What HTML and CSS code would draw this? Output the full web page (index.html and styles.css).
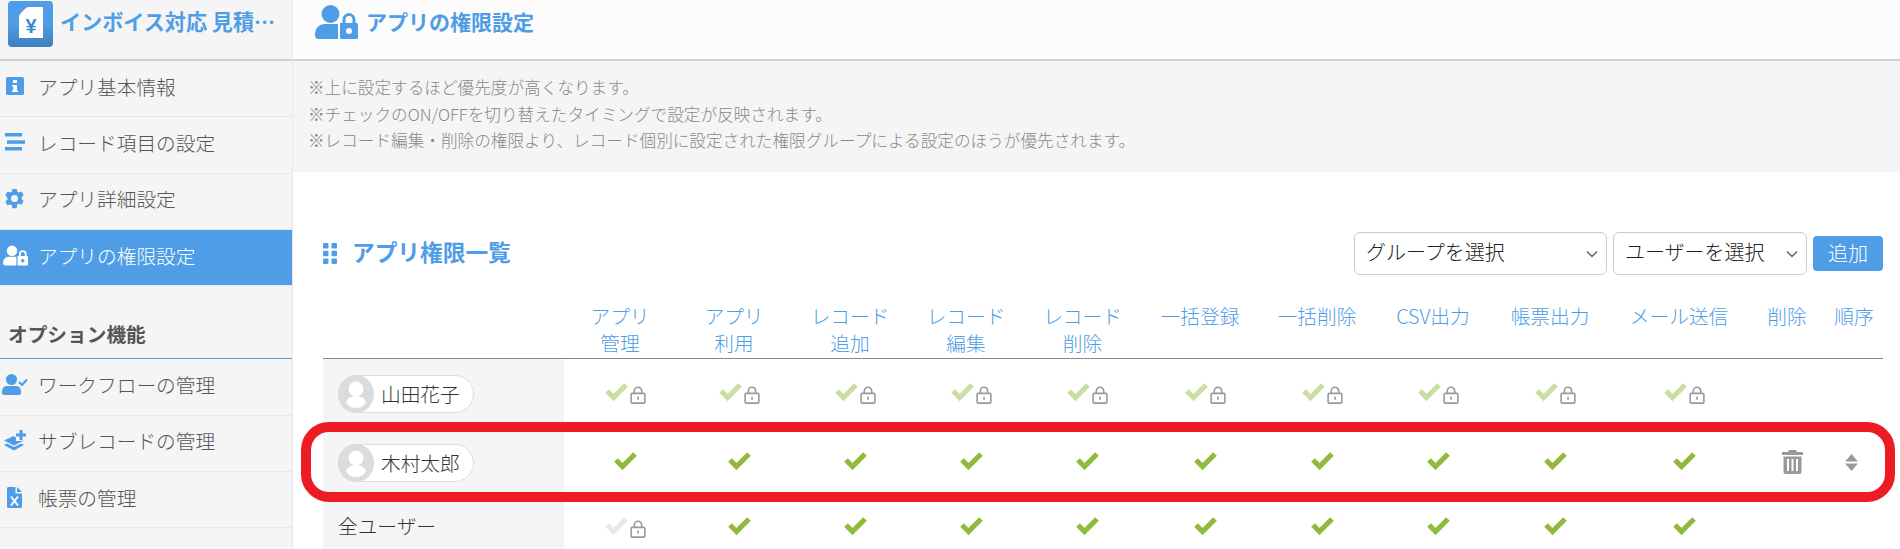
FILE: index.html
```html
<!DOCTYPE html>
<html lang="ja">
<head>
<meta charset="utf-8">
<title>アプリの権限設定</title>
<link rel="stylesheet" href="styles.css">
</head>
<body>
<svg class="defs" aria-hidden="true">
  <symbol id="i-check" viewBox="0 0 23 18"><path d="M2 8 8.500 14.500 21 2" fill="none" stroke="currentColor" stroke-width="5.200"/></symbol>
  <symbol id="i-lock" viewBox="0 0 15 17"><rect x="1" y="7" width="13" height="9.200" rx="1" fill="none" stroke="currentColor" stroke-width="1.500"/><path d="M4 7V4.700a3.500 3.500 0 0 1 7 0V7" fill="none" stroke="currentColor" stroke-width="1.500"/><rect x="6.800" y="10" width="1.500" height="3" fill="currentColor"/></symbol>
  <symbol id="i-userlock" viewBox="0 0 43 34"><circle cx="15.500" cy="9" r="9" fill="currentColor"/><path d="M0 30c0-7 4-11 10-11h11c1.600 0 2 .5 2 1v14H4c-2.500 0-4-1.500-4-4z" fill="currentColor"/><path fill-rule="evenodd" d="M25 18h2.500v-3.500a6.500 6.500 0 0 1 13 0V18h1c.8 0 1.500.7 1.500 1.500v13c0 .8-.7 1.500-1.500 1.500H26.500c-.8 0-1.500-.7-1.500-1.500zm5.500 0h7v-3.500a3.500 3.500 0 0 0-7 0zM34 23a3 3 0 1 0 0 6 3 3 0 0 0 0-6z" fill="currentColor"/></symbol>
  <symbol id="i-person" viewBox="0 0 36 38"><circle cx="18" cy="14" r="7.500" fill="#fff"/><ellipse cx="18" cy="27" rx="9.500" ry="6" fill="#fff"/></symbol>
</svg>

<div class="app">
  <aside class="sidebar">
    <div class="app-head">
      <svg class="app-logo" viewBox="0 0 45 46">
        <defs><linearGradient id="logo-grad" x1="0" y1="0" x2="0" y2="1"><stop offset="0.5" stop-color="#4e9de6"/><stop offset="1" stop-color="#3e7fbd"/></linearGradient></defs>
        <rect width="45" height="46" rx="4" fill="url(#logo-grad)"/>
        <path d="M19.500 6H35V37H11V14.500z" fill="#fff"/>
        <path d="M18 7V13H12z" fill="#fff"/>
        <text class="logo-yen" x="23" y="31.500" text-anchor="middle">¥</text>
      </svg>
      <div class="app-name">インボイス対応 見積…</div>
    </div>
    <nav>
      <a class="nav-item">
        <span class="nav-icon"><svg width="18" height="18" viewBox="0 0 18 18"><rect width="18" height="18" rx="1.500" fill="currentColor"/><rect x="7" y="3" width="4" height="3" fill="#fff"/><path d="M6 8h5v5.500h1V15H6v-1.500h1.200V9.500H6z" fill="#fff"/></svg></span>アプリ基本情報
      </a>
      <a class="nav-item">
        <span class="nav-icon"><svg width="20" height="18" viewBox="0 0 20 18"><rect width="17" height="3.500" fill="currentColor"/><rect x="2" y="7.300" width="18" height="3.500" fill="currentColor"/><rect y="14" width="17" height="3.500" fill="currentColor"/></svg></span>レコード項目の設定
      </a>
      <a class="nav-item">
        <span class="nav-icon"><svg width="21" height="21" viewBox="0 0 24 24"><path fill-rule="evenodd" fill="currentColor" d="M9.500 1h5l.7 3.200 1.800.9 3-1.200 2.500 4.300-2.400 2.200v2.200l2.400 2.200-2.500 4.300-3-1.200-1.800 1L14.500 23h-5l-.7-3.200-1.800-1-3 1.200-2.500-4.300 2.400-2.200v-2.200L1.500 8.200 4 3.900l3 1.200 1.800-.9zM12 8a4 4 0 1 0 0 8 4 4 0 0 0 0-8z"/></svg></span>アプリ詳細設定
      </a>
      <a class="nav-item is-active">
        <span class="nav-icon"><svg width="25" height="21"><use href="#i-userlock"/></svg></span>アプリの権限設定
      </a>
      <h2 class="nav-heading">オプション機能</h2>
      <a class="nav-item">
        <span class="nav-icon"><svg width="26" height="21" viewBox="0 0 26 21"><circle cx="9.500" cy="5.500" r="5.500" fill="currentColor"/><path d="M0 18c0-4 2-6 5-6h9c3 0 5 2 5 6v1c0 1-1 2-2 2H2c-1 0-2-1-2-2z" fill="currentColor"/><path d="M17 8l3 3 5-5.500" fill="none" stroke="currentColor" stroke-width="2.200"/></svg></span>ワークフローの管理
      </a>
      <a class="nav-item">
        <span class="nav-icon"><svg width="22" height="21" viewBox="0 0 22 21"><path d="M0 10.500 9.500 6 12 7.500v3.500h4.500L20 10.500 10 15.500z" fill="currentColor"/><path d="M0 15l3-1.500 7 3.500 7-3.500 3 1.500-10 5.500z" fill="currentColor"/><path d="M15.500 0h3v3.500H22v3h-3.500V10h-3V6.500H12v-3h3.500z" fill="currentColor"/></svg></span>サブレコードの管理
      </a>
      <a class="nav-item">
        <span class="nav-icon"><svg width="15" height="21" viewBox="0 0 15 21"><path d="M0 1.500C0 .7.700 0 1.500 0H8.500v6.500H15v13c0 .8-.7 1.500-1.500 1.500h-12C.7 21 0 20.300 0 19.500z" fill="currentColor"/><path d="M10 0l5 5h-5z" fill="currentColor"/><path d="M4 9.500 11 18.500M11 9.500 4 18.500" fill="none" stroke="#fff" stroke-width="2"/></svg></span>帳票の管理
      </a>
    </nav>
  </aside>

  <main class="content">
    <header class="page-head">
      <svg class="page-icon" width="43" height="34"><use href="#i-userlock"/></svg>
      <h1 class="page-title">アプリの権限設定</h1>
    </header>
    <div class="notes">
      <p>※上に設定するほど優先度が高くなります。</p>
      <p>※チェックのON/OFFを切り替えたタイミングで設定が反映されます。</p>
      <p>※レコード編集・削除の権限より、レコード個別に設定された権限グループによる設定のほうが優先されます。</p>
    </div>

    <section class="perm">
      <div class="toolbar">
        <h2 class="perm-title">
          <svg class="grip" width="14" height="21" viewBox="0 0 14 21"><rect width="5.500" height="5.500" rx="1" fill="currentColor"/><rect x="8.500" width="5.500" height="5.500" rx="1" fill="currentColor"/><rect y="7.700" width="5.500" height="5.500" rx="1" fill="currentColor"/><rect x="8.500" y="7.700" width="5.500" height="5.500" rx="1" fill="currentColor"/><rect y="15.500" width="5.500" height="5.500" rx="1" fill="currentColor"/><rect x="8.500" y="15.500" width="5.500" height="5.500" rx="1" fill="currentColor"/></svg>
          アプリ権限一覧
        </h2>
        <div class="controls">
          <select class="select select-group"><option>グループを選択</option></select>
          <select class="select select-user"><option>ユーザーを選択</option></select>
          <button class="btn-add" type="button">追加</button>
        </div>
      </div>

      <div class="grid grid-head">
        <div></div>
        <div>アプリ<br>管理</div><div>アプリ<br>利用</div><div>レコード<br>追加</div><div>レコード<br>編集</div><div>レコード<br>削除</div>
        <div>一括登録</div><div>一括削除</div><div>CSV出力</div><div>帳票出力</div><div>メール送信</div><div>削除</div><div>順序</div>
      </div>

      <div class="grid row">
        <div class="name-cell"><span class="pill"><svg class="avatar" width="36" height="38"><use href="#i-person"/></svg>山田花子</span></div>
        <div class="cell"><svg class="check soft"><use href="#i-check"/></svg><svg class="lock"><use href="#i-lock"/></svg></div>
        <div class="cell"><svg class="check soft"><use href="#i-check"/></svg><svg class="lock"><use href="#i-lock"/></svg></div>
        <div class="cell"><svg class="check soft"><use href="#i-check"/></svg><svg class="lock"><use href="#i-lock"/></svg></div>
        <div class="cell"><svg class="check soft"><use href="#i-check"/></svg><svg class="lock"><use href="#i-lock"/></svg></div>
        <div class="cell"><svg class="check soft"><use href="#i-check"/></svg><svg class="lock"><use href="#i-lock"/></svg></div>
        <div class="cell"><svg class="check soft"><use href="#i-check"/></svg><svg class="lock"><use href="#i-lock"/></svg></div>
        <div class="cell"><svg class="check soft"><use href="#i-check"/></svg><svg class="lock"><use href="#i-lock"/></svg></div>
        <div class="cell"><svg class="check soft"><use href="#i-check"/></svg><svg class="lock"><use href="#i-lock"/></svg></div>
        <div class="cell"><svg class="check soft"><use href="#i-check"/></svg><svg class="lock"><use href="#i-lock"/></svg></div>
        <div class="cell"><svg class="check soft"><use href="#i-check"/></svg><svg class="lock"><use href="#i-lock"/></svg></div>
        <div class="cell"></div><div class="cell"></div>
      </div>

      <div class="grid row">
        <div class="name-cell"><span class="pill"><svg class="avatar" width="36" height="38"><use href="#i-person"/></svg>木村太郎</span></div>
        <div class="cell"><svg class="check"><use href="#i-check"/></svg></div>
        <div class="cell"><svg class="check"><use href="#i-check"/></svg></div>
        <div class="cell"><svg class="check"><use href="#i-check"/></svg></div>
        <div class="cell"><svg class="check"><use href="#i-check"/></svg></div>
        <div class="cell"><svg class="check"><use href="#i-check"/></svg></div>
        <div class="cell"><svg class="check"><use href="#i-check"/></svg></div>
        <div class="cell"><svg class="check"><use href="#i-check"/></svg></div>
        <div class="cell"><svg class="check"><use href="#i-check"/></svg></div>
        <div class="cell"><svg class="check"><use href="#i-check"/></svg></div>
        <div class="cell"><svg class="check"><use href="#i-check"/></svg></div>
        <div class="cell"><svg class="trash" width="21" height="24" viewBox="0 0 21 24"><path d="M7 0h7l1 2h6v3H0V2h6z" fill="currentColor"/><path fill-rule="evenodd" d="M1.500 6.500h18V22c0 1-1 2-2 2h-14c-1 0-2-1-2-2zM5 9v12h2V9zm4.500 0v12h2V9zM14 9v12h2V9z" fill="currentColor"/></svg></div>
        <div class="cell cell-sort"><svg class="sort" width="13" height="17" viewBox="0 0 12 16"><path d="M6 0l6 7H0zM0 9h12l-6 7z" fill="currentColor"/></svg></div>
      </div>

      <div class="grid row row-plain">
        <div class="name-cell"><span class="name-text">全ユーザー</span></div>
        <div class="cell"><svg class="check faint"><use href="#i-check"/></svg><svg class="lock"><use href="#i-lock"/></svg></div>
        <div class="cell"><svg class="check"><use href="#i-check"/></svg></div>
        <div class="cell"><svg class="check"><use href="#i-check"/></svg></div>
        <div class="cell"><svg class="check"><use href="#i-check"/></svg></div>
        <div class="cell"><svg class="check"><use href="#i-check"/></svg></div>
        <div class="cell"><svg class="check"><use href="#i-check"/></svg></div>
        <div class="cell"><svg class="check"><use href="#i-check"/></svg></div>
        <div class="cell"><svg class="check"><use href="#i-check"/></svg></div>
        <div class="cell"><svg class="check"><use href="#i-check"/></svg></div>
        <div class="cell"><svg class="check"><use href="#i-check"/></svg></div>
        <div class="cell"></div><div class="cell"></div>
      </div>
    </section>
  </main>
</div>
<div class="highlight"></div>
</body>
</html>
```

FILE: styles.css
```css
* { box-sizing: border-box; }
html, body {
  margin: 0;
  height: 549px;
  overflow: hidden;
  background: #fff;
  color: #555;
  font-family: "Noto Sans CJK JP", "Noto Sans", sans-serif;
  font-weight: 300;
  font-size: 19.7px;
}
.defs { position: absolute; width: 0; height: 0; }
.app { display: flex; height: 549px; }

/* sidebar */
.sidebar {
  width: 293px;
  flex: none;
  background: #f6f5f6;
  border-right: 1px solid #e8e8e8;
}
.app-head {
  height: 61px;
  display: flex;
  align-items: flex-start;
  gap: 7px;
  padding: 1px 0 0 8px;
  border-bottom: 2px solid #d0d0d0;
}
.app-logo { width: 45px; height: 46px; flex: none; }
.logo-yen { font-size: 20px; font-weight: 700; fill: #3f8ad2; font-family: "Liberation Sans", sans-serif; }
.app-name {
  margin-top: 5px;
  font-size: 21.1px;
  line-height: 30px;
  font-weight: 700;
  color: #4e9de6;
  white-space: nowrap;
}
.nav-item {
  height: 56.33px;
  display: flex;
  align-items: center;
  padding-bottom: 5px;
  border-bottom: 1px solid #e9e8e9;
  color: #555;
  white-space: nowrap;
}
.nav-icon {
  width: 38px;
  flex: none;
  display: flex;
  justify-content: center;
  padding-right: 9px;
  color: #4e9de6;
}
.is-active { background: #4e9de6; color: #fff; border-bottom-color: #e9e8e9; }
.is-active .nav-icon { color: #fff; padding-right: 8px; }
.nav-heading {
  height: 73px;
  margin: 0;
  padding: 34px 0 0 8px;
  font-size: 19.7px;
  line-height: 28px;
  font-weight: 700;
  color: #555;
  border-bottom: 1px solid #4e9de6;
}

/* main */
.content { flex: 1; min-width: 0; }
.page-head {
  height: 61px;
  display: flex;
  align-items: flex-start;
  gap: 8px;
  padding: 5px 0 0 22px;
  background: #fcfcfd;
  border-bottom: 2px solid #d0d0d0;
  color: #4e9de6;
}
.page-title {
  margin: 0;
  font-size: 21px;
  line-height: 32px;
  font-weight: 700;
  color: #4e9de6;
}
.notes {
  height: 111px;
  padding: 13px 0 0 15px;
  background: #f6f5f6;
  color: #888;
  font-size: 16.64px;
  line-height: 26.6px;
}
.notes p { margin: 0; }

.perm { padding: 60px 17px 0 30px; }
.toolbar {
  display: flex;
  align-items: center;
  justify-content: space-between;
  height: 43px;
}
.perm-title {
  margin: 0;
  display: flex;
  align-items: center;
  gap: 15px;
  padding-bottom: 4px;
  font-size: 22.7px;
  line-height: 32px;
  font-weight: 700;
  color: #4e9de6;
}
.grip { margin-top: 4px; }
.controls { display: flex; align-items: center; gap: 6px; }
.select {
  appearance: none;
  height: 43px;
  padding: 0 28px 4px 11px;
  border: 1px solid #ccc;
  border-radius: 6px;
  background: #fff url("data:image/svg+xml,%3Csvg xmlns='http://www.w3.org/2000/svg' viewBox='0 0 12 8'%3E%3Cpath d='M1 1.500l5 5 5-5' fill='none' stroke='%23666' stroke-width='1.500'/%3E%3C/svg%3E") no-repeat right 8px center / 12px 8px;
  color: #222;
  font: inherit;
  font-size: 20px;
}
.select-group { width: 253px; }
.select-user { width: 194px; }
.btn-add {
  width: 70px;
  height: 35px;
  padding: 0 0 3px;
  border: 0;
  border-radius: 4px;
  background: #4e9de6;
  color: #fff;
  font: inherit;
  font-size: 20px;
}

.grid {
  display: grid;
  grid-template-columns: 241px 112px 116px 116px 116px 117px 118px 116px 116px 118px 140px 76px 58px;
}
.grid-head {
  margin-top: 23px;
  height: 61px;
  padding-top: 4px;
  border-bottom: 1px solid #888;
  color: #4e9de6;
  text-align: center;
  line-height: 27px;
}
.row { height: 69px; }
.row-plain { height: 60px; }
.name-cell {
  display: flex;
  align-items: center;
  padding-left: 15px;
  background: #f6f5f6;
  color: #333;
}
.pill {
  display: inline-flex;
  align-items: center;
  height: 38px;
  width: 136px;
  gap: 7px;
  border: 1px solid #ddd;
  border-radius: 19px;
  background: #fff;
  color: #333;
  line-height: 32px;
}
.avatar { margin-left: -1px; border-radius: 50%; background: #dcdcdc; flex: none; }
.name-text { padding-bottom: 3px; }
.cell {
  display: flex;
  align-items: center;
  justify-content: center;
  gap: 2px;
  padding: 0 0 3px 10px;
}
.cell-sort { padding: 0 6px 1px 0; }
.check { width: 23px; height: 18px; color: #8fba3c; flex: none; }
.check.soft { color: #c9dea0; }
.check.faint { color: #e8e8e8; }
.lock { width: 16px; height: 18px; margin-top: 6px; color: #999; flex: none; }
.trash, .sort { color: #999; }
.trash { margin-top: 2px; }

/* annotation drawn over the screenshot */
.highlight {
  position: absolute;
  left: 301px;
  top: 422px;
  width: 1594px;
  height: 80px;
  border: 10px solid #ed1c24;
  border-radius: 28px;
  pointer-events: none;
}
```
